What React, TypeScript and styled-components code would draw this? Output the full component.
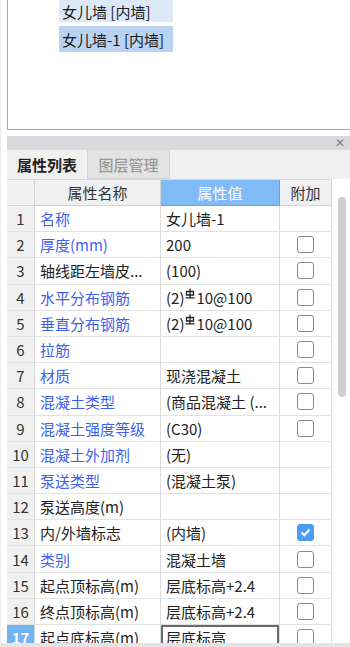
import styled, { createGlobalStyle } from 'styled-components'

const GlobalStyle = createGlobalStyle`
  html, body {
    margin: 0;
    padding: 0;
    background: #fff;
  }
  body {
    font-family: "Noto Sans CJK SC", "Noto Sans", sans-serif;
  }
`

const Page = styled.div`
  width: 350px;
  height: 647px;
  overflow: hidden;
  display: flex;
  flex-direction: column;
  background: #fff;
  border-left: 1px solid #ececec;
  box-sizing: border-box;
  padding-left: 2px;
`

const TopPanel = styled.div`
  height: 130px;
  flex-shrink: 0;
  margin-left: 4px;
  border-left: 1px solid #a8a8a8;
  border-bottom: 1px solid #a8a8a8;
  box-sizing: border-box;
  padding-left: 51px;
  display: flex;
  flex-direction: column;
  gap: 4px;
`

const ListItem = styled.div<{ $selected?: boolean }>`
  width: 114px;
  height: ${(p) => (p.$selected ? 26 : 22)}px;
  box-sizing: border-box;
  padding-left: 3px;
  display: flex;
  align-items: center;
  font-size: 15px;
  color: #1a1a1a;
  background: ${(p) => (p.$selected ? '#b9d3f1' : '#dde9f8')};
  white-space: nowrap;
`

const Panel = styled.div`
  margin-top: 6px;
  margin-left: 4px;
  flex: 1;
  display: flex;
  flex-direction: column;
  min-height: 0;
`

const TitleBar = styled.div`
  height: 14px;
  flex-shrink: 0;
  background: #d9d9de;
  display: flex;
  justify-content: flex-end;
  align-items: center;
  padding-right: 5px;
  font-size: 12px;
  color: #808080;
  font-family: "DejaVu Sans", sans-serif;
`

const Tabs = styled.div`
  height: 29px;
  flex-shrink: 0;
  background: #f0f0f0;
  display: flex;
`

const Tab = styled.div<{ $active?: boolean }>`
  width: ${(p) => (p.$active ? 81 : 82)}px;
  box-sizing: border-box;
  display: flex;
  align-items: center;
  justify-content: center;
  font-size: 15px;
  font-weight: ${(p) => (p.$active ? 700 : 500)};
  color: ${(p) => (p.$active ? '#222' : '#9a9a9a')};
  background: ${(p) => (p.$active ? '#f0f0f0' : '#e3e3e3')};
  border-right: 1px solid #d3d3d3;
  border-bottom: ${(p) => (p.$active ? 'none' : '1px solid #d3d3d3')};
`

const Body = styled.div`
  flex: 1;
  display: flex;
  min-height: 0;
  overflow: hidden;
`

const Grid = styled.div`
  width: 325px;
  flex-shrink: 0;
  display: grid;
  grid-template-columns: 28px 126px 119px 52px;
  grid-auto-rows: 26.2px;
  grid-template-rows: 26px;
  align-content: start;
  border-top: 1px solid #d8d8d8;
`

const Cell = styled.div`
  box-sizing: border-box;
  border-right: 1px solid #dcdcdc;
  border-bottom: 1px solid #e2e2e2;
  display: flex;
  align-items: center;
  font-size: 15px;
  white-space: nowrap;
  overflow: hidden;
  min-width: 0;
`

const HeadCell = styled(Cell)<{ $active?: boolean }>`
  justify-content: center;
  background: ${(p) => (p.$active ? '#80bbf7' : '#f0f0f0')};
  color: ${(p) => (p.$active ? '#fff' : '#333')};
  border-right-color: ${(p) => (p.$active ? '#5da3ee' : '#d4d4d4')};
  border-bottom-color: ${(p) => (p.$active ? '#5da3ee' : '#d4d4d4')};
`

const NumCell = styled(Cell)<{ $selected?: boolean }>`
  justify-content: center;
  background: ${(p) => (p.$selected ? '#72b3f4' : '#f0f0f0')};
  color: ${(p) => (p.$selected ? '#fff' : '#333')};
  font-weight: ${(p) => (p.$selected ? 700 : 400)};
  border-right-color: #d4d4d4;
`

const NameCell = styled(Cell)<{ $blue?: boolean }>`
  padding-left: 5px;
  color: ${(p) => (p.$blue ? '#3f5ff0' : '#222')};
`

const NameText = styled.span`
  overflow: hidden;
  text-overflow: ellipsis;
`

const ValueCell = styled(Cell)<{ $editing?: boolean }>`
  padding-left: 5px;
  color: #222;
  box-shadow: ${(p) => (p.$editing ? 'inset 0 0 0 2px #6a6a6a' : 'none')};
`

const ValueText = styled.span`
  overflow: hidden;
  text-overflow: ellipsis;
  display: flex;
  align-items: center;
`

const CheckCell = styled(Cell)`
  justify-content: center;
`

const Box = styled.span<{ $checked?: boolean }>`
  width: 17px;
  height: 17px;
  box-sizing: border-box;
  border-radius: 3px;
  border: 1.5px solid ${(p) => (p.$checked ? '#4b9cf2' : '#8a8a8a')};
  background: ${(p) => (p.$checked ? '#4b9cf2' : '#fff')};
  display: flex;
  align-items: center;
  justify-content: center;
`

const ScrollTrack = styled.div`
  flex: 1;
  position: relative;
  background: #fff;
`

const Thumb = styled.div`
  position: absolute;
  left: 6px;
  top: 18px;
  width: 8px;
  height: 200px;
  border-radius: 4px;
  background: #cfcfcf;
`

const BottomBar = styled.div`
  height: 4px;
  flex-shrink: 0;
  margin-left: -3px;
  background: #e4e4e4;
`

const Steel = () => (
  <svg width="10" height="11" viewBox="0 0 10 11" style={{ margin: '0 1px', alignSelf: 'flex-start', marginTop: 1 }}>
    <path d="M5 0.5V9.5M1.5 3.5H8.5V7H1.5ZM0.5 9.8H9.5" stroke="#222" strokeWidth="1.3" fill="none" />
  </svg>
)

type Row = {
  name: string
  blue?: boolean
  value: React.ReactNode
  check?: 'none' | 'on' | 'off'
}

const steelValue = (
  <>
    (2)
    <Steel />
    10@100
  </>
)

const rows: Row[] = [
  { name: '名称', blue: true, value: '女儿墙-1', check: 'none' },
  { name: '厚度(mm)', blue: true, value: '200' },
  { name: '轴线距左墙皮...', value: '(100)' },
  { name: '水平分布钢筋', blue: true, value: steelValue },
  { name: '垂直分布钢筋', blue: true, value: steelValue },
  { name: '拉筋', blue: true, value: '' },
  { name: '材质', blue: true, value: '现浇混凝土' },
  { name: '混凝土类型', blue: true, value: '(商品混凝土 (...' },
  { name: '混凝土强度等级', blue: true, value: '(C30)' },
  { name: '混凝土外加剂', blue: true, value: '(无)', check: 'none' },
  { name: '泵送类型', blue: true, value: '(混凝土泵)', check: 'none' },
  { name: '泵送高度(m)', value: '', check: 'none' },
  { name: '内/外墙标志', value: '(内墙)', check: 'on' },
  { name: '类别', blue: true, value: '混凝土墙' },
  { name: '起点顶标高(m)', value: '层底标高+2.4' },
  { name: '终点顶标高(m)', value: '层底标高+2.4' },
  { name: '起点底标高(m)', value: '层底标高' },
]

const App = () => {
  return (
    <>
      <GlobalStyle />
      <Page>
        <TopPanel>
          <ListItem>女儿墙 [内墙]</ListItem>
          <ListItem $selected>女儿墙-1 [内墙]</ListItem>
        </TopPanel>
        <Panel>
          <TitleBar>✕</TitleBar>
          <Tabs>
            <Tab $active>属性列表</Tab>
            <Tab>图层管理</Tab>
          </Tabs>
          <Body>
            <Grid>
              <HeadCell />
              <HeadCell>属性名称</HeadCell>
              <HeadCell $active>属性值</HeadCell>
              <HeadCell>附加</HeadCell>
              {rows.map((r, i) => {
                const last = i === rows.length - 1
                const check = r.check ?? 'off'
                return [
                  <NumCell key={`n${i}`} $selected={last}>{i + 1}</NumCell>,
                  <NameCell key={`a${i}`} $blue={r.blue}>
                    <NameText>{r.name}</NameText>
                  </NameCell>,
                  <ValueCell key={`v${i}`} $editing={last}>
                    <ValueText>{r.value}</ValueText>
                  </ValueCell>,
                  <CheckCell key={`c${i}`}>
                    {check !== 'none' && (
                      <Box $checked={check === 'on'}>
                        {check === 'on' && (
                          <svg width="11" height="9" viewBox="0 0 11 9">
                            <path d="M1.5 4.5L4.3 7.2L9.5 1.5" stroke="#fff" strokeWidth="2" fill="none" />
                          </svg>
                        )}
                      </Box>
                    )}
                  </CheckCell>,
                ]
              })}
            </Grid>
            <ScrollTrack>
              <Thumb />
            </ScrollTrack>
          </Body>
        </Panel>
        <BottomBar />
      </Page>
    </>
  )
}

export default App
